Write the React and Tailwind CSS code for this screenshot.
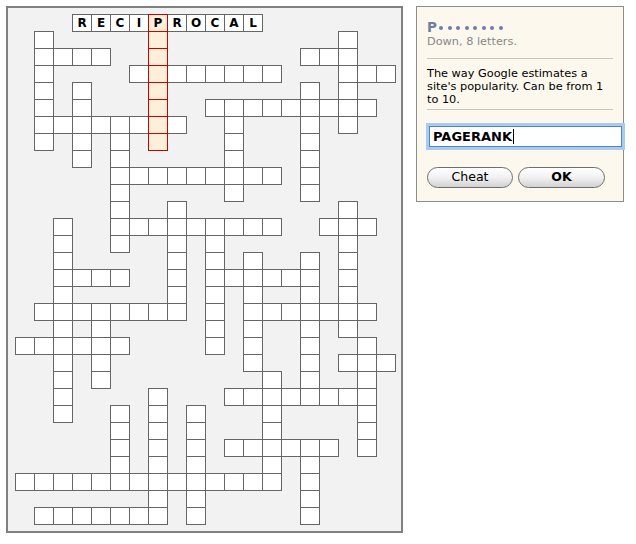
import React from 'react';

// grid is 20 cols x 30 rows; each row lists filled columns (number or [from, to])
const ROWS = [
  [[3, 12]],
  [1, 7, 17],
  [[1, 4], 7, [15, 17]],
  [1, [6, 13], [17, 19]],
  [1, 3, 7, 15, 17],
  [1, 3, 7, [10, 18]],
  [[1, 8], 11, 15, 17],
  [1, 3, 5, 7, 11, 15],
  [3, 5, 11, 15],
  [[5, 13], 15],
  [5, 11, 15],
  [5, 8, 17],
  [2, [5, 13], [16, 18]],
  [2, 5, 8, 10, 17],
  [2, 8, 10, 12, 15, 17],
  [[2, 5], 8, [10, 15], 17],
  [2, 8, 10, 12, 15, 17],
  [[1, 8], 10, [12, 18]],
  [2, 4, 10, 12, 15, 17],
  [[0, 5], 10, 12, 15, 18],
  [2, 4, 12, 15, [17, 19]],
  [2, 4, 13, 15, 18],
  [2, 7, [11, 18]],
  [2, 5, 7, 9, 13, 18],
  [5, 7, 9, 13, 18],
  [5, 7, 9, [11, 16], 18],
  [5, 7, 9, 13, 15],
  [[0, 13], 15],
  [7, 9, 15],
  [[1, 7], 9, 15],
];

const ACROSS = 'RECIPROCAL';
const COLS = 20;

const filledSet = (spec) => {
  const s = new Set();
  spec.forEach((item) => {
    if (Array.isArray(item)) {
      for (let c = item[0]; c <= item[1]; c++) s.add(c);
    } else {
      s.add(item);
    }
  });
  return s;
};

const Cell = ({ letter, active }) => (
  <div
    className={
      'w-[20px] h-[18px] border flex items-center justify-center ' +
      (active ? 'relative z-10 border-[#cc0000] bg-[#fdefd8]' : 'border-[#666666] bg-white')
    }
  >
    {letter && (
      <span className="text-[12px] leading-none font-bold text-black">{letter}</span>
    )}
  </div>
);

const Grid = () => (
  <div className="w-[397px] h-[527px] border-2 border-[#808080] bg-[#f2f2f2] pl-[7px] pt-[6px]">
    {ROWS.map((spec, r) => {
      const filled = filledSet(spec);
      return (
        <div key={r} className="flex h-[17px]">
          {Array.from({ length: COLS }).map((_, c) => (
            <div key={c} className="w-[19px] h-[17px] shrink-0">
              {filled.has(c) && (
                <Cell letter={r === 0 ? ACROSS[c - 3] : null} active={c === 7 && r <= 7} />
              )}
            </div>
          ))}
        </div>
      );
    })}
  </div>
);

const CluePanel = () => (
  <div className="w-[208px] h-[196px] border border-[#8c8c8c] bg-[#fcf8ee] pt-[13px] px-[10px]">
    <div className="flex items-center h-[14px] text-[#6d7fa5]">
      <span className="text-[13.5px] leading-[14px] font-bold">P</span>
      <div className="flex items-center gap-[4.6px] ml-[2px] mt-[1px]">
        {Array.from({ length: 8 }).map((_, i) => (
          <span key={i} className="block w-[4px] h-[4px] rounded-full bg-[#6d7fa5]" />
        ))}
      </div>
    </div>
    <div className="mt-[1px] text-[11.3px] leading-[14px] text-[#888888]">Down, 8 letters.</div>
    <div className="mt-[9px] border-t border-[#c9c6bf]" />
    <p className="mt-[8px] text-[11.3px] leading-[13px] text-black">
      The way Google estimates a site's popularity. Can be from 1 to 10.
    </p>
    <div className="mt-[3px] border-t border-[#c9c6bf]" />
    <div className="mt-[16px] ml-[2px] w-[193px] h-[21px] bg-white border border-[#4f86c6] ring-[3px] ring-[#a9cbef] flex items-center pl-[3px]">
      <span className="text-[13px] leading-none font-bold text-black">PAGERANK</span>
      <span className="block w-px h-[15px] bg-black ml-[1px]" />
    </div>
    <div className="mt-[20px] flex gap-[5px]">
      <button className="w-[86px] h-[21px] rounded-full border border-[#6e6e6e] bg-gradient-to-b from-white via-[#f1f1f1] to-[#d2d2d2] text-[12.5px] leading-none text-black">
        Cheat
      </button>
      <button className="w-[87px] h-[21px] rounded-full border border-[#6e6e6e] bg-gradient-to-b from-white via-[#f1f1f1] to-[#d2d2d2] text-[12.5px] leading-none font-bold text-black">
        OK
      </button>
    </div>
  </div>
);

export default function App() {
  return (
    <div
      className="w-[636px] h-[544px] bg-white flex items-start gap-[13px] pt-[6px] pl-[6px]"
      style={{ fontFamily: '"DejaVu Sans", Verdana, sans-serif' }}
    >
      <Grid />
      <CluePanel />
    </div>
  );
}
